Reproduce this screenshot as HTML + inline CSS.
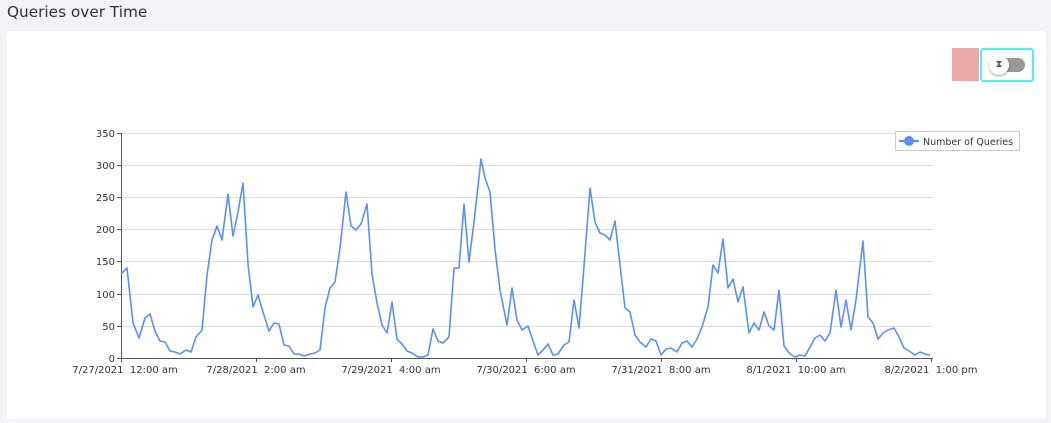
<!DOCTYPE html>
<html><head><meta charset="utf-8"><style>
body{margin:0;width:1051px;height:423px;background:#f3f3f7;font-family:"DejaVu Sans","Liberation Sans",sans-serif;overflow:hidden;position:relative}
h1{position:absolute;left:7px;top:3px;margin:0;font-size:15.3px;font-weight:normal;color:#333}
.card{position:absolute;left:7px;top:31px;width:1039px;height:388px;background:#fff;border-radius:3px}
.pink{position:absolute;left:952px;top:48px;width:27px;height:33px;background:#eaa8a8}
.tog{position:absolute;left:980px;top:48px;width:50px;height:30px;border:2px solid #4ff0f4;border-radius:3px;background:#fff}
.track{position:absolute;left:12px;top:8px;width:31px;height:14px;border-radius:7px;background:#999}
.knob{position:absolute;left:7px;top:5px;width:20px;height:20px;border-radius:50%;background:#fff;box-shadow:0 1px 2px rgba(0,0,0,.4);font-size:10px;text-align:center;line-height:20px;color:#555}
text{white-space:pre}
</style></head><body>
<h1>Queries over Time</h1>
<div class="card"></div>
<div class="pink"></div>
<div class="tog"><div class="track"></div><div class="knob">⧗</div></div>
<svg width="1051" height="423" style="position:absolute;left:0;top:0" font-family="DejaVu Sans, Liberation Sans, sans-serif" font-size="10" fill="#333" xml:space="preserve">
<g stroke="#ddd" stroke-width="1">
<line x1="121" y1="133.5" x2="933" y2="133.5"/><line x1="121" y1="165.5" x2="933" y2="165.5"/><line x1="121" y1="197.5" x2="933" y2="197.5"/><line x1="121" y1="229.5" x2="933" y2="229.5"/><line x1="121" y1="261.5" x2="933" y2="261.5"/><line x1="121" y1="294.5" x2="933" y2="294.5"/><line x1="121" y1="326.5" x2="933" y2="326.5"/>
</g>
<g stroke="#555" stroke-width="1">
<line x1="121.5" y1="133" x2="121.5" y2="358"/><line x1="121" y1="358.5" x2="933" y2="358.5"/>
<line x1="117" y1="133.5" x2="121" y2="133.5"/><line x1="117" y1="165.5" x2="121" y2="165.5"/><line x1="117" y1="197.5" x2="121" y2="197.5"/><line x1="117" y1="229.5" x2="121" y2="229.5"/><line x1="117" y1="261.5" x2="121" y2="261.5"/><line x1="117" y1="294.5" x2="121" y2="294.5"/><line x1="117" y1="326.5" x2="121" y2="326.5"/><line x1="117" y1="358.5" x2="121" y2="358.5"/>
<line x1="121.5" y1="358" x2="121.5" y2="362"/><line x1="256.5" y1="358" x2="256.5" y2="362"/><line x1="391.5" y1="358" x2="391.5" y2="362"/><line x1="526.5" y1="358" x2="526.5" y2="362"/><line x1="661.5" y1="358" x2="661.5" y2="362"/><line x1="796.5" y1="358" x2="796.5" y2="362"/><line x1="931.5" y1="358" x2="931.5" y2="362"/>
</g>
<g text-anchor="end">
<text x="115" y="137">350</text><text x="115" y="169">300</text><text x="115" y="201">250</text><text x="115" y="233">200</text><text x="115" y="265">150</text><text x="115" y="298">100</text><text x="115" y="330">50</text><text x="115" y="362">0</text>
</g>
<g text-anchor="middle">
<text x="125" y="373">7/27/2021  12:00 am</text><text x="256" y="373">7/28/2021  2:00 am</text><text x="391" y="373">7/29/2021  4:00 am</text><text x="526" y="373">7/30/2021  6:00 am</text><text x="661" y="373">7/31/2021  8:00 am</text><text x="796" y="373">8/1/2021  10:00 am</text><text x="931" y="373">8/2/2021  1:00 pm</text>
</g>
<polyline fill="none" stroke="#5b8ff9" stroke-width="1.6" stroke-linejoin="round" points="121,274 127,268 133,323 139,338 145,318 150,314 155,331 160,341 165,342 170,351 175,352 180,354 186,350 191,352 196,337 202,330 207,275 212,240 217,226 222,240 228,194 233,236 238,212 243,183 248,264 253,307 258,295 263,312 269,331 274,323 279,324 284,345 289,346 294,354 299,354 304,356 310,354 315,353 320,350 325,308 330,288 335,282 340,248 346,192 351,226 356,230 361,224 367,204 372,274 377,303 382,325 387,333 392,302 397,339 402,344 407,351 412,353 418,357 423,357 428,355 433,329 438,341 443,343 449,337 454,268 459,268 464,204 469,262 474,222 481,159 485,178 490,192 495,249 500,290 507,325 512,288 517,320 522,330 528,326 533,341 538,355 543,350 548,344 553,355 558,354 564,345 569,342 574,300 579,328 584,266 590,188 595,222 600,233 605,235 610,240 615,221 620,265 625,308 630,312 635,335 640,342 646,347 651,339 656,341 661,355 666,349 671,348 677,352 682,343 687,341 692,347 697,339 702,327 708,307 713,265 718,273 723,239 728,288 733,279 738,302 743,287 749,333 754,323 759,330 764,312 769,326 774,330 779,290 784,346 790,354 795,357 800,355 805,356 810,347 815,338 820,335 825,341 830,333 836,290 841,327 846,300 851,330 856,300 863,241 868,317 873,323 878,339 883,333 888,330 894,328 899,337 904,348 909,351 915,355 920,352 925,354 930,355"/>
<rect x="895.5" y="131.5" width="124" height="19" fill="#fff" stroke="#ccc"/>
<line x1="899" y1="141" x2="919" y2="141" stroke="#5b8ff9" stroke-width="2"/>
<circle cx="909" cy="141" r="5" fill="#5b8ff9"/>
<text x="923" y="145" font-size="9.5">Number of Queries</text>
</svg>
</body></html>
